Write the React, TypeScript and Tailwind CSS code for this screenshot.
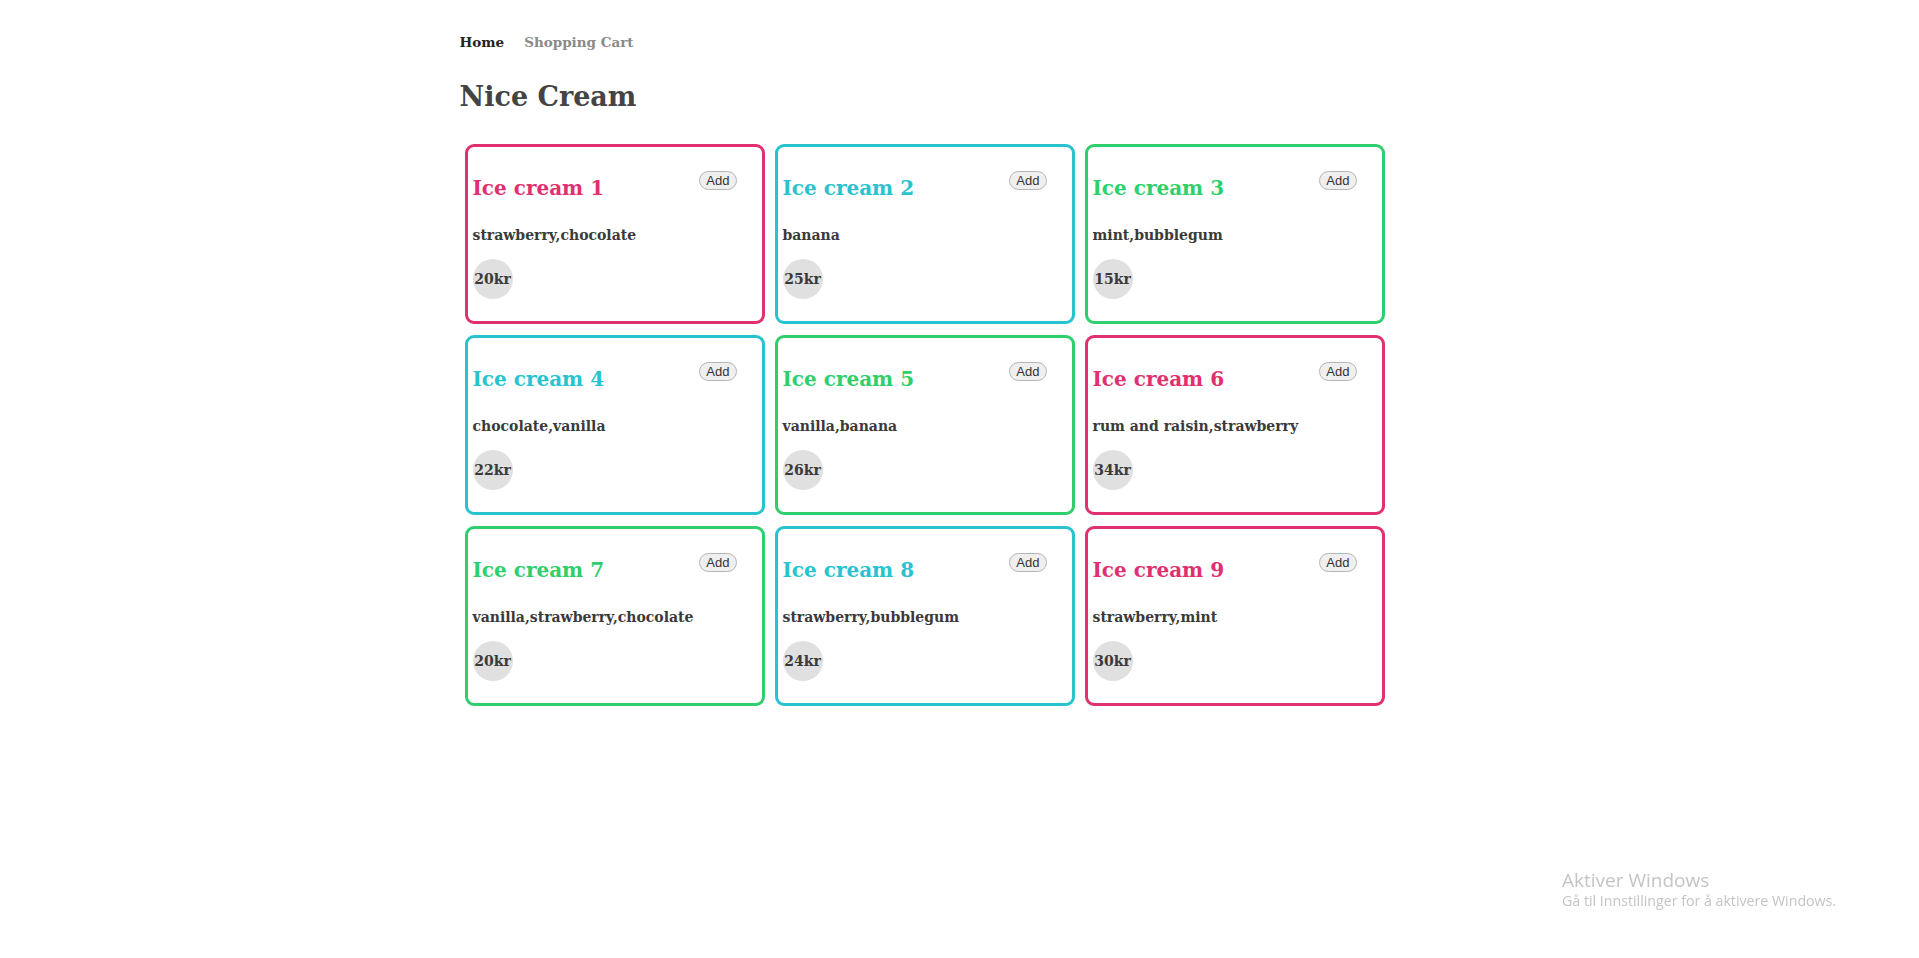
const PINK = "pink";
const CYAN = "cyan";
const GREEN = "green";

type Tone = typeof PINK | typeof CYAN | typeof GREEN;

const ICE_CREAMS: { name: string; flavors: string; price: number; tone: Tone }[] = [
  { name: "Ice cream 1", flavors: "strawberry,chocolate", price: 20, tone: PINK },
  { name: "Ice cream 2", flavors: "banana", price: 25, tone: CYAN },
  { name: "Ice cream 3", flavors: "mint,bubblegum", price: 15, tone: GREEN },
  { name: "Ice cream 4", flavors: "chocolate,vanilla", price: 22, tone: CYAN },
  { name: "Ice cream 5", flavors: "vanilla,banana", price: 26, tone: GREEN },
  { name: "Ice cream 6", flavors: "rum and raisin,strawberry", price: 34, tone: PINK },
  { name: "Ice cream 7", flavors: "vanilla,strawberry,chocolate", price: 20, tone: GREEN },
  { name: "Ice cream 8", flavors: "strawberry,bubblegum", price: 24, tone: CYAN },
  { name: "Ice cream 9", flavors: "strawberry,mint", price: 30, tone: PINK },
];

const BORDER: Record<Tone, string> = {
  pink: "border-[#e0306f]",
  cyan: "border-[#27c4cf]",
  green: "border-[#2ecf6c]",
};

const TITLE: Record<Tone, string> = {
  pink: "text-[#e0306f]",
  cyan: "text-[#27c4cf]",
  green: "text-[#2ecf6c]",
};

function Card({ name, flavors, price, tone }: (typeof ICE_CREAMS)[number]) {
  return (
    <div className={`w-[300px] h-[180px] border-[3px] rounded-[9px] px-[5px] bg-white ${BORDER[tone]}`}>
      <div className="flex items-start justify-between">
        <h2 className={`mt-[27px] text-[20px] leading-[28px] font-bold ${TITLE[tone]}`}>{name}</h2>
        <button className="mt-[24px] mr-[20px] h-[19px] px-[6px] rounded-full border border-[#b5b5b5] bg-[#efefef] text-[13px] leading-[17px] text-[#333] font-['Liberation_Sans',Arial,sans-serif]">
          Add
        </button>
      </div>
      <p className="mt-[23px] text-[14px] leading-[20px] font-bold text-[#3a3a3a]">{flavors}</p>
      <div className="mt-[14px] w-[40px] h-[40px] rounded-full bg-[#e0e0e0] flex items-center justify-center">
        <span className="text-[14px] font-bold text-[#3a3a3a] whitespace-nowrap">{price}kr</span>
      </div>
    </div>
  );
}

export default function App() {
  return (
    <div className="min-h-screen bg-white font-['DejaVu_Serif',serif]">
      <div className="w-[1000px] mx-auto">
        {/* Top nav */}
        <nav className="pt-[30px] flex gap-[20px] text-[13.5px] leading-[24px] font-bold">
          <a className="text-[#222]">Home</a>
          <a className="text-[#8a8a8a]">Shopping Cart</a>
        </nav>

        <h1 className="mt-[23px] text-[27px] leading-[40px] font-bold text-[#444]">Nice Cream</h1>

        <div className="mt-[27px] px-[5px] grid grid-cols-[repeat(3,300px)] gap-x-[10px] gap-y-[11px]">
          {ICE_CREAMS.map((ic) => (
            <Card key={ic.name} {...ic} />
          ))}
        </div>
      </div>

      {/* Windows activation watermark */}
      <div className="fixed left-[1562px] top-[869px] text-[#c4c4c4] font-['Open_Sans',sans-serif] pointer-events-none">
        <div className="text-[19px] leading-[22px]">Aktiver Windows</div>
        <div className="text-[14.2px] leading-[20px]">Gå til Innstillinger for å aktivere Windows.</div>
      </div>
    </div>
  );
}
